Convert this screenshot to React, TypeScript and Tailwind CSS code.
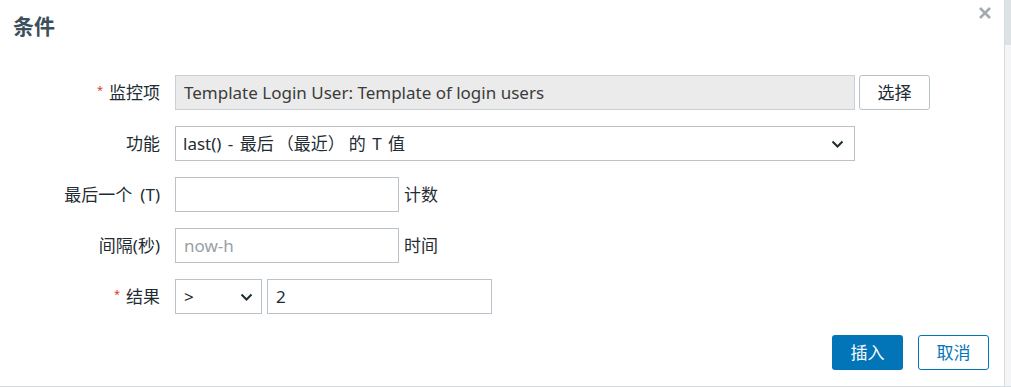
import React from 'react';

const font = { fontFamily: '"Noto Sans", "Noto Sans CJK SC", sans-serif' };

const Chevron: React.FC = () => (
  <svg width="13" height="8" viewBox="0 0 13 8" className="shrink-0" aria-hidden>
    <polyline points="1.5,1.5 6.5,6.5 11.5,1.5" fill="none" stroke="#1f2c33" strokeWidth="2" />
  </svg>
);

const Label: React.FC<{ text: React.ReactNode; required?: boolean }> = ({ text, required }) => (
  <div className="flex h-[35px] w-[160px] items-center justify-end text-[17px] text-[#1f2c33]">
    {required ? <span className="mr-[6px] -mt-[5px] text-[11px] text-[#e33734]">*</span> : null}
    {text}
  </div>
);

export default function App() {
  return (
    <div className="flex h-[387px] w-[1011px] bg-white" style={font}>
      <div className="relative flex-1 border-r border-b border-[#d5dbdf] bg-white">
        <h1 className="absolute left-[13px] top-[11px] text-[21px] font-bold text-[#3d4f5b]">条件</h1>
        <svg className="absolute right-[12px] top-[6px]" width="14" height="14" viewBox="0 0 14 14" aria-hidden>
          <path d="M2 2 L12 12 M12 2 L2 12" stroke="#a3abb1" strokeWidth="2.6" />
        </svg>

        <div className="flex flex-col gap-[16px] pt-[75px]">
          <div className="flex items-center gap-[15px]">
            <Label text="监控项" required />
            <div className="flex h-[35px] w-[680px] items-center border border-[#c7d0d6] bg-[#ebebeb] px-[8px] text-[17px] text-[#3b3b3b]">
              Template Login User: Template of login users
            </div>
            <button className="-ml-[11px] h-[35px] w-[71px] rounded-[3px] border border-[#b9c2c8] bg-white text-[17px] text-[#1f2c33]">
              选择
            </button>
          </div>

          <div className="flex items-center gap-[15px]">
            <Label text="功能" />
            <div className="flex h-[35px] w-[680px] items-center justify-between border border-[#b9c3c9] bg-white pl-[7px] pr-[10px] text-[17px] text-[#1f2c33]">
              <span className="[word-spacing:2px]">
                last() - 最后<span className="ml-[3px]">（最近）</span>
                <span className="ml-[4px]">的 T 值</span>
              </span>
              <Chevron />
            </div>
          </div>

          <div className="flex items-center gap-[15px]">
            <Label
              text={
                <>
                  最后一个<span className="ml-[8px]">(T)</span>
                </>
              }
            />
            <div className="h-[35px] w-[224px] border border-[#b9c3c9] bg-white" />
            <span className="-ml-[10px] text-[17px] text-[#1f2c33]">计数</span>
          </div>

          <div className="flex items-center gap-[15px]">
            <Label text="间隔(秒)" />
            <div className="flex h-[35px] w-[224px] items-center border border-[#b9c3c9] bg-white px-[8px] text-[17px] text-[#9aa0a4]">
              now-h
            </div>
            <span className="-ml-[10px] text-[17px] text-[#1f2c33]">时间</span>
          </div>

          <div className="flex items-center gap-[15px]">
            <Label text="结果" required />
            <div className="flex items-center gap-[5px]">
              <div className="flex h-[35px] w-[87px] items-center justify-between border border-[#b9c3c9] bg-white pl-[8px] pr-[8px] text-[17px] text-[#1f2c33]">
                <span>&gt;</span>
                <Chevron />
              </div>
              <div className="flex h-[35px] w-[225px] items-center border border-[#b9c3c9] bg-white px-[8px] text-[17px] text-[#1f2c33]">
                2
              </div>
            </div>
          </div>
        </div>

        <div className="absolute bottom-[16px] right-[15px] flex gap-[15px]">
          <button className="h-[35px] w-[71px] rounded-[3px] bg-[#0275b8] text-[17px] text-white">插入</button>
          <button className="h-[35px] w-[71px] rounded-[3px] border border-[#0275b8] bg-white text-[17px] text-[#0275b8]">取消</button>
        </div>
      </div>
      <div className="flex w-[6px] flex-col border-b border-[#d5dbdf] bg-[#f3f5f6]">
        <div className="h-[45px] bg-[#dde2e5]" />
      </div>
    </div>
  );
}
